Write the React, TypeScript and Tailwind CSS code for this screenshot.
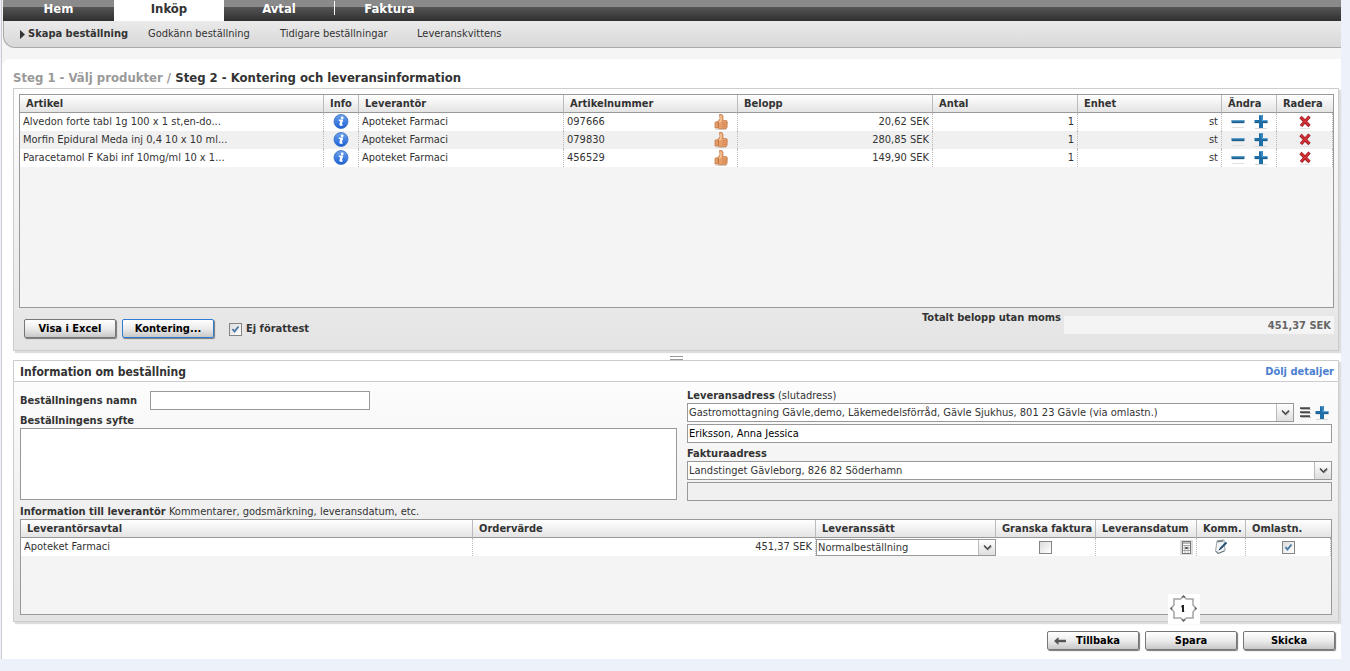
import type { ReactNode } from "react";

const articles = [
  { name: "Alvedon forte tabl 1g 100 x 1 st,en-do...", supplier: "Apoteket Farmaci", number: "097666", amount: "20,62 SEK" },
  { name: "Morfin Epidural Meda inj 0,4 10 x 10 ml...", supplier: "Apoteket Farmaci", number: "079830", amount: "280,85 SEK" },
  { name: "Paracetamol F Kabi inf 10mg/ml 10 x 1...", supplier: "Apoteket Farmaci", number: "456529", amount: "149,90 SEK" },
];

function InfoIcon() {
  return (
    <svg width="16" height="16" viewBox="0 0 16 16">
      <defs>
        <linearGradient id="info" x1="0" y1="0" x2="0" y2="1">
          <stop offset="0" stopColor="#6fa3ea" />
          <stop offset="1" stopColor="#1a5fd6" />
        </linearGradient>
      </defs>
      <circle cx="8" cy="7.5" r="7" fill="url(#info)" stroke="#3a6fc4" strokeWidth="0.8" />
      <circle cx="9.2" cy="3.8" r="1.4" fill="#fff" />
      <path d="M5.8 6.3h3.4L7.8 11h1.8" stroke="#fff" strokeWidth="1.6" fill="none" />
      <path d="M8.400 6.500 7.300 11.300" stroke="#fff" strokeWidth="2" />
    </svg>
  );
}

function ThumbIcon() {
  return (
    <svg width="14" height="16" viewBox="0 0 14 16">
      <ellipse cx="7" cy="15.2" rx="6.5" ry="0.8" fill="#d8d8d8" />
      <path
        d="M5.500 .5H8l1 2v4.200l3.500-.2 .8 1.300-.3 5.700-1 1.300H5.500L4 14H1V8.200L4 7.500 6 4.500z"
        fill="#e8a06a"
        stroke="#bd7040"
        strokeWidth="0.7"
      />
      <path d="M7 1.500v4.500L5.500 8.500" stroke="#f8cda4" strokeWidth="1.3" fill="none" />
      <path d="M8 8.800h5M8 10.800h5M8 12.700h4.600" stroke="#c47a48" strokeWidth="0.6" />
      <path d="M4.300 8v5.800" stroke="#a85f32" strokeWidth="0.8" />
    </svg>
  );
}

function MinusIcon() {
  return (
    <svg width="14" height="16" viewBox="0 0 14 16">
      <path d="M1 13.5h12" stroke="#e0e0e0" />
      <rect x="0.5" y="6" width="13" height="3" fill="#2a74a8" />
      <path d="M1 6.5h12" stroke="#5f9fca" />
      <path d="M1 8.7h12" stroke="#1a4f78" strokeWidth="0.8" />
    </svg>
  );
}

function PlusIcon() {
  return (
    <svg width="14" height="16" viewBox="0 0 14 16">
      <path d="M1 14.5h12" stroke="#d8d8d8" />
      <path d="M5 1h4v5h4.500v3H9v5H5V9H.5V6H5z" fill="#1e6fa8" />
      <path d="M5.500 1.500H8v5h5" stroke="#5ea3d2" fill="none" />
      <path d="M1 8.700h4M9 8.700h4.500" stroke="#1a4f78" strokeWidth="0.7" />
    </svg>
  );
}

function DeleteIcon() {
  return (
    <svg width="12" height="16" viewBox="0 0 12 16">
      <path d="M1 14.5h10" stroke="#e4e4e4" />
      <path d="M1.500 3 10.500 12M10.500 2.500 2 12" stroke="#8e1a1e" strokeWidth="3.2" />
      <path d="M1.800 3 10.200 11.500M10 3 2.200 11.700" stroke="#d32f35" strokeWidth="2" />
    </svg>
  );
}

function ListIcon() {
  return (
    <svg width="12" height="14" viewBox="0 0 12 14">
      <path d="M2 3.5h10M2 7.500h10M2 11.500h10" stroke="#bbb" />
      <path d="M1 2.200h10M1 6.200h10M1 10.200h10" stroke="#4a4a4a" strokeWidth="1.8" />
    </svg>
  );
}

function CalendarIcon() {
  return (
    <svg width="13" height="15" viewBox="0 0 13 15">
      <rect width="13" height="15" fill="#dcdcdc" />
      <rect x="2.500" y="1.500" width="8" height="12" fill="#fff" stroke="#777" />
      <rect x="3" y="2" width="7" height="2" fill="#bbb" />
      <path d="M3 5.500h7M3 8h7M3 10.500h7M5 5v8M8 5v8" stroke="#999" strokeWidth="0.8" />
      <rect x="5.500" y="7" width="2" height="2" fill="#444" />
    </svg>
  );
}

function NoteIcon() {
  return (
    <svg width="14" height="16" viewBox="0 0 14 16">
      <path d="M3 2 10 1l1 10.500-7 3-2.500-2z" fill="#f2f5f6" stroke="#9aa3a8" />
      <path d="M3 1.500 9 .8v2L3.500 3.500z" fill="#7f8b90" />
      <path d="M2.500 12 4 14.500l6.500-2.500" stroke="#6b777c" fill="none" />
      <path d="M12.500 3.500 6 10" stroke="#24506e" strokeWidth="1.8" />
      <path d="M6.200 9.800 4.800 11.200" stroke="#222" />
    </svg>
  );
}

function Badge() {
  return (
    <svg width="32" height="30" viewBox="0 0 32 30">
      <rect width="32" height="30" fill="#fff" />
      <path
        d="M6 11V5h6.500l3-2.500 3 2.500H25v6l3 3.500-3 3.500v6h-6.500l-3 2.500-3-2.500H6v-6l-3-3.500z"
        fill="#fff"
        stroke="#a4a4a4"
        strokeWidth="1.500"
      />
      <path d="M14 3.500 15.500 2 17 3.500M4 13.500 3 14.500l1 1M27 13.500l1 1-1 1M14 25.500l1.500 1.500 1.500-1.500" stroke="#666" fill="none" strokeWidth="1.500" />
      <path d="M13 11.500h2.500v6M13.500 17.500h3.500" stroke="#ccc" />
      <path d="M15 11v7" stroke="#222" strokeWidth="2" />
    </svg>
  );
}

function Checkbox({ id, label, checked }: { id: string; label?: string; checked?: boolean }) {
  return (
    <span className="relative block size-[13px]">
      <input
        id={id}
        type="checkbox"
        aria-label={label}
        defaultChecked={checked}
        className="peer block size-[13px] appearance-none border border-[#858585] bg-linear-to-br from-[#dcdcdc] to-white"
      />
      <svg className="pointer-events-none absolute inset-0 hidden peer-checked:block" width="13" height="13" viewBox="0 0 13 13">
        <path d="M3.500 6 5.500 8.500 9.500 3.500" stroke="#4d7aa5" strokeWidth="2" fill="none" />
      </svg>
    </span>
  );
}

function Select({ id, label, value, small }: { id?: string; label?: string; value: string; small?: boolean }) {
  return (
    <span className={small ? "relative flex h-[17px] border border-[#999]" : "relative flex h-[19px] flex-1 border border-[#999]"}>
      <select id={id} aria-label={label} className="w-full appearance-none bg-white pl-px leading-4 text-[#333]">
        <option>{value}</option>
      </select>
      <span className="pointer-events-none absolute inset-y-0 right-0 flex w-[17px] items-center justify-center border-l border-[#bbb] bg-linear-to-b from-white to-[#dedede]">
        <svg width="9" height="7" viewBox="0 0 9 7">
          <path d="M1.500 2.500 5 6l3.500-3.500" stroke="#bbb" strokeWidth="1.500" fill="none" />
          <path d="M1 1.500 4.500 5 8 1.500" stroke="#444" strokeWidth="1.500" fill="none" />
        </svg>
      </span>
    </span>
  );
}

function Button({ children, focused }: { children: ReactNode; focused?: boolean }) {
  return (
    <button
      className={
        "relative h-[19px] w-[92px] rounded-xs border bg-linear-to-b from-white via-[#ececec] to-[#c8c8c8] font-bold text-black shadow-[1px_1px_1px_#777] " +
        (focused ? "border-[#2d7dd2]" : "border-[#777]")
      }
    >
      {children}
    </button>
  );
}

function HeadCell({ children }: { children: ReactNode }) {
  return (
    <th className="overflow-hidden border-r border-b border-r-[#bbb] border-b-[#999] bg-linear-to-b from-white to-[#e4e4e4] pl-1.5 text-left font-bold last:border-r-0">
      {children}
    </th>
  );
}

const cell = "border-r border-dotted border-[#bbb] px-[3px]";

export default function App() {
  return (
    <div className="min-h-screen bg-[#edf2fa] pr-[9px] pb-[11px] pl-px font-['DejaVu_Sans_Condensed','DejaVu_Sans',sans-serif] text-[11px] leading-4 text-[#333]">
      <div className="border-l border-[#ccc] bg-[#f5f5f5]">
        {/* Main menu */}
        <nav className="ml-px flex h-[21px] bg-[linear-gradient(#8a8a8a_0_7px,#555_7px,#303030)] text-center text-[13px] leading-[18px] font-bold text-white">
          <a href="#" className="w-[111px]">Hem</a>
          <a href="#" className="w-[110px] bg-white text-[#333]">Inköp</a>
          <a href="#" className="w-[110px]">Avtal</a>
          <span className="mt-px h-[14px] w-px bg-white" />
          <a href="#" className="w-[109px]">Faktura</a>
        </nav>
        <nav className="ml-px flex h-[27px] items-center rounded-bl-xl border-b border-l border-[#aaa] bg-linear-to-b from-[#eaeaea] to-[#d8d8d8] pl-4">
          <a href="#" className="flex w-[128px] items-center gap-[3px] font-bold whitespace-nowrap">
            <svg width="5" height="9" viewBox="0 0 5 9">
              <path d="M0 0 5 4.500 0 9z" fill="#333" />
            </svg>
            Skapa beställning
          </a>
          <a href="#" className="w-[132px]">Godkänn beställning</a>
          <a href="#" className="w-[137px]">Tidigare beställningar</a>
          <a href="#">Leveranskvittens</a>
        </nav>

        <main className="mt-[11px] rounded-tl-lg bg-white pt-2.5 pr-0.5 pb-[9px] pl-[11px]">
          <h1 className="mb-px text-[13px] leading-[18px] font-bold">
            <span className="text-[#999]">Steg 1 - Välj produkter /</span> Steg 2 - Kontering och leveransinformation
          </h1>

          <section className="border border-[#ccc] bg-linear-to-b from-white to-[#e4e4e4] pt-[5px] pr-1 pb-[11px] pl-[5px] shadow-[2px_2px_1px_#ddd]">
            <div className="h-[214px] border border-[#999] bg-[#f4f4f4]">
              <table className="w-full table-fixed border-separate border-spacing-0">
                <colgroup>
                  <col />
                  <col className="w-[35px]" />
                  <col className="w-[205px]" />
                  <col className="w-[174px]" />
                  <col className="w-[195px]" />
                  <col className="w-[145px]" />
                  <col className="w-[144px]" />
                  <col className="w-[55px]" />
                  <col className="w-[56px]" />
                </colgroup>
                <thead>
                  <tr className="h-[18px]">
                    <HeadCell>Artikel</HeadCell>
                    <HeadCell>Info</HeadCell>
                    <HeadCell>Leverantör</HeadCell>
                    <HeadCell>Artikelnummer</HeadCell>
                    <HeadCell>Belopp</HeadCell>
                    <HeadCell>Antal</HeadCell>
                    <HeadCell>Enhet</HeadCell>
                    <HeadCell>Ändra</HeadCell>
                    <HeadCell>Radera</HeadCell>
                  </tr>
                </thead>
                <tbody>
                  {articles.map((a) => (
                    <tr key={a.number} className="h-[18px] bg-white even:bg-[#f0f0f0]">
                      <td className={cell}>{a.name}</td>
                      <td className={cell}>
                        <button className="mx-auto block" aria-label="Info"><InfoIcon /></button>
                      </td>
                      <td className={cell}>{a.supplier}</td>
                      <td className={cell}>
                        <span className="flex items-center justify-between pr-1.5">
                          {a.number}
                          <ThumbIcon />
                        </span>
                      </td>
                      <td className={cell + " text-right"}>{a.amount}</td>
                      <td className={cell + " text-right"}>1</td>
                      <td className={cell + " text-right"}>st</td>
                      <td className={cell}>
                        <span className="flex justify-center gap-[9px]">
                          <button aria-label="Minska"><MinusIcon /></button>
                          <button aria-label="Öka"><PlusIcon /></button>
                        </span>
                      </td>
                      <td className={cell}>
                        <button className="mx-auto block" aria-label="Radera"><DeleteIcon /></button>
                      </td>
                    </tr>
                  ))}
                </tbody>
              </table>
            </div>

            <div className="flex h-7 items-start pt-2 pl-[5px]">
              <div className="flex gap-1.5 pt-[3px]">
                <Button>Visa i Excel</Button>
                <Button focused>Kontering...</Button>
              </div>
              <div className="flex items-center gap-1 pt-[5px] pl-[15px]">
                <Checkbox id="forattest" checked />
                <label htmlFor="forattest" className="font-bold">Ej förattest</label>
              </div>
              <div className="ml-auto flex">
                <label htmlFor="total" className="-mt-1.5 font-bold">Totalt belopp utan moms</label>
                <input id="total" readOnly value="451,37 SEK" className="ml-[3px] h-[18px] w-[270px] bg-[#f4f4f4] pr-[3px] text-right font-bold text-[#666]" />
              </div>
            </div>
            <div className="h-[3px]" />
          </section>

          {/* Splitter */}
          <div className="flex h-[9px] items-center justify-center">
            <span className="mt-1 h-1 w-[13px] border-y border-[#999]" />
          </div>

          <section className="border border-[#ccc] bg-linear-to-b from-white to-[#e4e4e4] pb-1.5 shadow-[2px_2px_1px_#ddd]">
            <header className="flex h-[21px] items-center justify-between border-b border-[#ccc] bg-white pt-0.5 pr-1 pl-1.5 font-bold">
              <h2 className="text-xs">Information om beställning</h2>
              <a href="#" className="text-[#4a7fd0]">Dölj detaljer</a>
            </header>

            <div className="px-1.5">
              <div className="grid grid-cols-[657fr_645fr] gap-2.5">
                <div className="flex flex-col pt-[9px]">
                  <div className="flex items-center">
                    <label htmlFor="namn" className="w-[130px] font-bold">Beställningens namn</label>
                    <input id="namn" className="h-[19px] w-[220px] border border-[#999] bg-white px-px" />
                  </div>
                  <label htmlFor="syfte" className="pt-1 leading-[14px] font-bold">Beställningens syfte</label>
                  <textarea id="syfte" className="h-[72px] resize-none border border-[#999] bg-white" />
                </div>

                <div className="flex flex-col pt-[3px]">
                  <label htmlFor="leverans" className="pt-1 leading-[14px]">
                    <b>Leveransadress</b> (slutadress)
                  </label>
                  <div className="flex items-center">
                    <Select id="leverans" value="Gastromottagning Gävle,demo, Läkemedelsförråd, Gävle Sjukhus, 801 23 Gävle (via omlastn.)" />
                    <button className="ml-[5px]" aria-label="Lista"><ListIcon /></button>
                    <button className="mr-[3px] ml-1" aria-label="Lägg till"><PlusIcon /></button>
                  </div>
                  <input aria-label="Mottagare" defaultValue="Eriksson, Anna Jessica" className="mt-0.5 h-[19px] border border-[#999] bg-white px-px text-black" />
                  <label htmlFor="faktura" className="pt-1 leading-[14px] font-bold">Fakturaadress</label>
                  <div className="flex">
                    <Select id="faktura" value="Landstinget Gävleborg, 826 82 Söderhamn" />
                  </div>
                  <input aria-label="Fakturamottagare" className="mt-0.5 h-[19px] border border-[#999] bg-[#f0f0f0] px-px" />
                </div>
              </div>

              <p className="pt-1 leading-[14px]">
                <b>Information till leverantör</b> Kommentarer, godsmärkning, leveransdatum, etc.
              </p>
              <div className="relative h-24 border border-[#999] bg-[#f4f4f4]">
                <table className="w-full table-fixed border-separate border-spacing-0">
                  <colgroup>
                    <col />
                    <col className="w-[343px]" />
                    <col className="w-[180px]" />
                    <col className="w-[100px]" />
                    <col className="w-[101px]" />
                    <col className="w-[49px]" />
                    <col className="w-[85px]" />
                  </colgroup>
                  <thead>
                    <tr className="h-[18px] whitespace-nowrap">
                      <HeadCell>Leverantörsavtal</HeadCell>
                      <HeadCell>Ordervärde</HeadCell>
                      <HeadCell>Leveranssätt</HeadCell>
                      <HeadCell>Granska faktura</HeadCell>
                      <HeadCell>Leveransdatum</HeadCell>
                      <HeadCell>Komm.</HeadCell>
                      <HeadCell>Omlastn.</HeadCell>
                    </tr>
                  </thead>
                  <tbody>
                    <tr className="h-[18px] bg-white">
                      <td className={cell}>Apoteket Farmaci</td>
                      <td className={cell + " text-right"}>451,37 SEK</td>
                      <td>
                        <Select small label="Leveranssätt" value="Normalbeställning" />
                      </td>
                      <td className={cell}>
                        <span className="flex justify-center"><Checkbox id="granska" label="Granska faktura" /></span>
                      </td>
                      <td className={cell}>
                        <button className="ml-auto block" aria-label="Leveransdatum"><CalendarIcon /></button>
                      </td>
                      <td className={cell}>
                        <button className="mx-auto block" aria-label="Kommentar"><NoteIcon /></button>
                      </td>
                      <td className={cell}>
                        <span className="flex justify-center"><Checkbox id="omlastn" label="Omlastning" checked /></span>
                      </td>
                    </tr>
                  </tbody>
                </table>
                <span className="absolute right-[131px] -bottom-[10px]">
                  <Badge />
                </span>
              </div>
            </div>
          </section>

          <footer className="flex justify-end gap-1.5 pt-[9px] pr-1">
            <Button>
              <svg className="absolute top-[5px] left-1.5" width="12" height="8" viewBox="0 0 12 8">
                <path d="M4.500 0v2.800H12v2.400H4.500V8L0 4z" fill="#555" />
              </svg>
              <span className="pl-2.5">Tillbaka</span>
            </Button>
            <Button>Spara</Button>
            <Button>Skicka</Button>
          </footer>
        </main>
      </div>
    </div>
  );
}
